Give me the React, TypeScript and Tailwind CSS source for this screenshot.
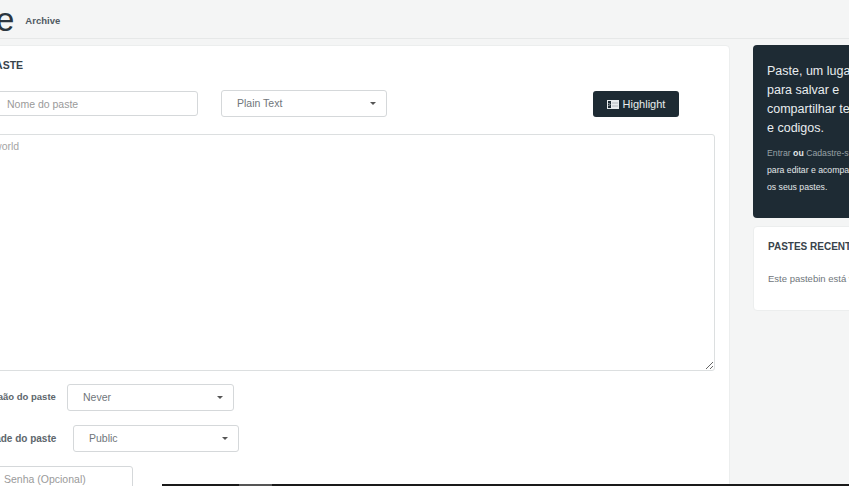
function Caret() {
  return <span className="h-0 w-0 border-x-[3px] border-t-[3px] border-x-transparent border-t-[#555]" />
}

function SelectBox({ label, className }: { label: string; className: string }) {
  return (
    <div className={`flex items-center justify-between rounded-[3px] border border-[#d5d8da] bg-white pl-[15px] pr-[10px] text-[10.5px] text-[#6f767b] ${className}`}>
      <span>{label}</span>
      <Caret />
    </div>
  )
}

export default function App() {
  return (
    <div className="relative h-screen w-full overflow-hidden bg-[#f4f5f5] font-['Liberation_Sans',Arial,sans-serif]">
      <header className="flex h-[39px] items-center border-b border-[#e6e8e8]">
        <span className="ml-[-4px] text-[33px] leading-none text-[#2b3640]">e</span>
        <span className="ml-[11px] mt-[5px] text-[9.5px] font-bold text-[#4f5962]">Archive</span>
      </header>

      <main className="ml-[-60px] mt-[6px] flex gap-[23px]">
        <section className="h-[500px] w-[790px] shrink-0 rounded-[4px] border border-[#eceeee] bg-white pl-[19px] pr-[14px]">
          <h2 className="ml-[-5px] mt-[13px] text-[10.5px] font-bold leading-[13px] text-[#38434b]">NOVO PASTE</h2>

          <div className="mt-[18px] flex items-center">
            <input
              className="ml-[35px] h-[25px] w-[203px] rounded-[3px] border border-[#d5d8da] bg-white px-[11px] text-[10.5px] placeholder:text-[#9a9a9a]"
              placeholder="Nome do paste"
            />
            <SelectBox label="Plain Text" className="ml-[23px] h-[27px] w-[166px]" />
            <button
              type="button"
              className="ml-[206px] flex h-[26px] w-[86px] items-center justify-center gap-[4px] rounded-[3px] bg-[#1e2b34] pt-[1px] text-[11px] text-[#e8ecee]"
            >
              <svg width="12" height="9" viewBox="0 0 12 9" aria-hidden="true">
                <rect width="12" height="9" fill="#e8ecee" />
                <rect x="1" y="1" width="3" height="7" fill="#1e2b34" />
                <path d="M1.5 3 L3 4.5 L1.5 6" fill="none" stroke="#e8ecee" strokeWidth="0.8" />
                <path d="M5 3 H11 M5 6 H11" stroke="#8a959c" strokeWidth="0.6" />
              </svg>
              Highlight
            </button>
          </div>

          <textarea
            className="mt-[17px] block h-[237px] w-[755px] rounded-[3px] border border-[#dcdfe0] bg-white py-[4px] pl-[8px] pr-[12px] text-[10.5px] placeholder:text-[#a5a5a5]"
            placeholder="hello world"
          />

          <div className="mt-[13px] flex items-center">
            <span className="ml-[14px] w-[93px] text-[9.5px] font-bold text-[#5d666c]">Expiraão do paste</span>
            <SelectBox label="Never" className="h-[27px] w-[167px]" />
          </div>
          <div className="mt-[14px] flex items-center">
            <span className="ml-[-3px] w-[116px] text-[10px] font-bold text-[#5d666c]">Visibilidade do paste</span>
            <SelectBox label="Public" className="h-[27px] w-[166px]" />
          </div>
          <input
            className="ml-[32px] mt-[14px] h-[25px] w-[141px] rounded-[3px] border border-[#d5d8da] bg-white px-[11px] text-[10.5px] placeholder:text-[#9a9a9a]"
            placeholder="Senha (Opcional)"
          />
        </section>

        <aside className="flex w-[280px] shrink-0 flex-col gap-[8px]">
          <div className="h-[173px] rounded-[4px] bg-[#1e2b34] px-[14px] pt-[17px]">
            <p className="text-[12.5px] leading-[19px] text-[#e9edef]">
              Paste, um lugar
              <br />
              para salvar e
              <br />
              compartilhar textos
              <br />
              e codigos.
            </p>
            <p className="mt-[7px] text-[8.7px] leading-[17px] text-[#e3e7e9]">
              <span className="text-[#98a1a6]">Entrar</span> <b>ou</b> <span className="text-[#98a1a6]">Cadastre-se</span>
              <br />
              para editar e acompanhar
              <br />
              os seus pastes.
            </p>
          </div>
          <div className="h-[85px] rounded-[4px] border border-[#eceeee] bg-white px-[14px] pt-[13px]">
            <h3 className="text-[10px] font-bold leading-[13px] text-[#38434b]">PASTES RECENTES</h3>
            <p className="mt-[20px] text-[9.5px] leading-[12px] text-[#6f767b]">Este pastebin está vazio</p>
          </div>
        </aside>
      </main>

      <div className="absolute bottom-0 left-[162px] right-0 flex h-[2px] bg-[#1a1a1a]">
        <span className="ml-[77px] w-[33px] bg-[#555]" />
      </div>
    </div>
  )
}
